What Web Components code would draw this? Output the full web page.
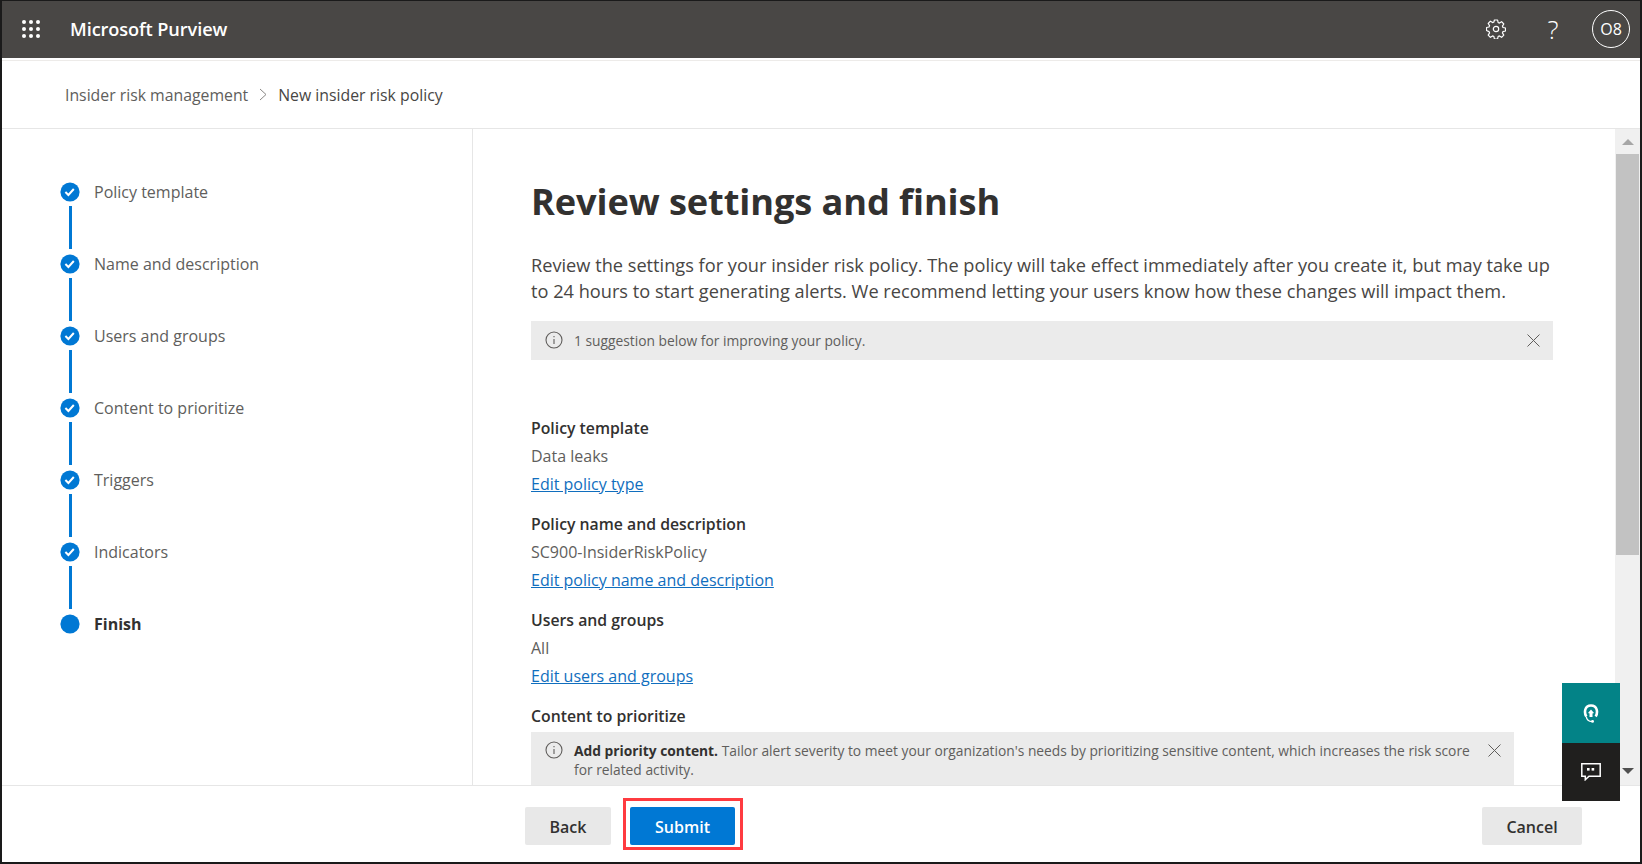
<!DOCTYPE html>
<html lang="en">
<head>
<meta charset="utf-8">
<title>New insider risk policy</title>
<style>
  html, body { margin: 0; height: 100%; overflow: hidden; background: #fff; }
  body { font-family: "Open Sans", "Liberation Sans", sans-serif; color: #323130; }
</style>
</head>
<body>
<purview-app></purview-app>

<script>
const INFO_ICON = `<svg width="18" height="18" viewBox="0 0 18 18" fill="none" stroke="#605e5c" stroke-width="1.1"><circle cx="9" cy="9" r="8"/><path d="M9 8v5M9 5v1.3"/></svg>`;
const CLOSE_ICON = `<svg width="13" height="13" viewBox="0 0 13 13" fill="none" stroke="#605e5c" stroke-width="1"><path d="M.5.5l12 12M12.5.5l-12 12"/></svg>`;

class AppHeader extends HTMLElement {
  constructor() {
    super();
    const shadow = this.attachShadow({ mode: "open" });
    const dots = [3, 10, 17].flatMap((y) => [3, 10, 17].map((x) => `<circle cx="${x}" cy="${y}" r="2"/>`)).join("");
    shadow.innerHTML = `
    <style>
      :host { display: flex; align-items: center; box-sizing: border-box; height: 57px; padding-bottom: 2px; background: #494745; color: #fff; flex: none; }
      .waffle { display: flex; margin-left: 19px; }
      .name { margin-left: 29px; font-size: 18.2px; font-weight: 600; letter-spacing: -0.1px; flex: 1; }
      .icons { display: flex; align-items: center; }
      .gear { display: flex; margin-right: 37px; }
      .help { font-size: 26px; font-weight: 300; width: 20px; text-align: center; margin-right: 29px; line-height: 1; }
      .me { width: 36px; height: 36px; border: 1px solid #fff; border-radius: 50%; display: flex; align-items: center; justify-content: center; font-size: 16px; margin-right: 10px; }
    </style>
    <span class="waffle"><svg width="20" height="20" viewBox="0 0 20 20" fill="#fff">${dots}</svg></span>
    <span class="name">Microsoft Purview</span>
    <div class="icons">
      <span class="gear"><svg width="20" height="20" viewBox="0 0 20 20" fill="none" stroke="#fff" stroke-width="1.2" stroke-linejoin="round">
        <circle cx="10" cy="10" r="2.7"/>
        <path d="M8.4 1h3.2l.5 2.5 1.3.6 2.2-1.4 2.2 2.3-1.4 2.1.6 1.4 2.5.5v3l-2.5.6-.6 1.3 1.4 2.2-2.2 2.2-2.2-1.4-1.3.6-.5 2.5H8.4l-.5-2.5-1.3-.6-2.2 1.4-2.2-2.2 1.4-2.2-.6-1.3L.5 11.5v-3L3 8l.6-1.4-1.4-2.1 2.2-2.3 2.2 1.4 1.3-.6z"/>
      </svg></span>
      <span class="help">?</span>
      <span class="me">O8</span>
    </div>`;
  }
}

class AppBreadcrumb extends HTMLElement {
  constructor() {
    super();
    this.attachShadow({ mode: "open" }).innerHTML = `
    <style>
      :host { display: flex; align-items: center; flex: none; height: 67px; margin-top: 2px; border-top: 1px solid #edebe9; border-bottom: 1px solid #e6e6e6; padding-left: 63px; font-size: 15.8px; color: #605e5c; }
      svg { margin: 0 10px 0 11px; }
      .current { color: #484644; }
    </style>
    <span>Insider risk management</span>
    <svg width="9" height="13" viewBox="0 0 9 13" fill="none" stroke="#8a8886"><path d="M1 1l6 5.5L1 12"/></svg>
    <span class="current">New insider risk policy</span>`;
  }
}

class WizardStep extends HTMLElement {
  constructor() {
    super();
    const current = this.hasAttribute("current");
    const check = current ? "" : `<path d="M5.4 10l3 3 5.4-6" fill="none" stroke="#fff" stroke-width="2"/>`;
    this.attachShadow({ mode: "open" }).innerHTML = `
    <style>
      :host { display: flex; flex-direction: column; height: 72px; }
      :host(:last-child) { height: auto; }
      .row { display: flex; align-items: center; height: 20px; }
      svg { flex: none; }
      .label { margin-left: 14px; font-size: 16px; color: #605e5c; }
      :host([current]) .label { font-weight: 700; color: #323130; }
      .line { width: 3px; height: 43px; margin: 4px 0 0 9px; background: #0078d4; }
      :host(:last-child) .line { display: none; }
    </style>
    <div class="row">
      <svg width="20" height="20" viewBox="0 0 20 20"><circle cx="10" cy="10" r="9.6" fill="#0078d4"/>${check}</svg>
      <span class="label"><slot></slot></span>
    </div>
    <div class="line"></div>`;
  }
}

class WizardSteps extends HTMLElement {
  constructor() {
    super();
    this.attachShadow({ mode: "open" }).innerHTML = `
    <style>
      :host { display: block; width: 412px; flex: none; padding: 53px 0 0 58px; border-right: 1px solid #e6e6e6; }
    </style>
    <slot></slot>`;
  }
}

class InfoBar extends HTMLElement {
  constructor() {
    super();
    this.attachShadow({ mode: "open" }).innerHTML = `
    <style>
      :host { display: flex; align-items: flex-start; background: #ebebeb; font-size: 13.8px; line-height: 19px; color: #605e5c; padding: 10px 13px 10px 14px; }
      .i { display: flex; flex: none; margin: 0 11px 0 0; }
      .text { flex: 1; }
      .x { display: flex; flex: none; margin: 3px 0 0 10px; }
      ::slotted(b) { font-weight: 700; color: #323130; }
    </style>
    <span class="i">${INFO_ICON}</span>
    <span class="text"><slot></slot></span>
    <span class="x">${CLOSE_ICON}</span>`;
  }
}

class ReviewSection extends HTMLElement {
  constructor() {
    super();
    const heading = this.getAttribute("heading") || "";
    const value = this.getAttribute("value");
    const link = this.getAttribute("link");
    this.attachShadow({ mode: "open" }).innerHTML = `
    <style>
      :host { display: block; font-size: 16px; line-height: 28px; margin-bottom: 12px; color: #605e5c; }
      .h { font-weight: 600; color: #323130; font-size: 15.8px; }
      a { display: inline-block; color: #106ebe; text-decoration: underline; }
    </style>
    <div class="h">${heading}</div>
    ${value ? `<div>${value}</div>` : ""}
    ${link ? `<a href="#">${link}</a>` : ""}
    <slot></slot>`;
  }
}

class ScrollTrack extends HTMLElement {
  constructor() {
    super();
    this.attachShadow({ mode: "open" }).innerHTML = `
    <style>
      :host { display: flex; flex-direction: column; align-items: center; width: 25px; flex: none; background: #f0f0f0; }
      .up { width: 0; height: 0; margin-top: 10px; border: 6px solid transparent; border-top: 0; border-bottom-color: #a6a6a6; }
      .thumb { width: 23px; height: 401px; background: #c2c2c2; margin-top: 9px; }
      .down { width: 0; height: 0; margin-top: auto; margin-bottom: 11px; border: 6px solid transparent; border-bottom: 0; border-top-color: #505050; }
    </style>
    <span class="up"></span><span class="thumb"></span><span class="down"></span>`;
  }
}

class ReviewPane extends HTMLElement {
  constructor() {
    super();
    this.attachShadow({ mode: "open" }).innerHTML = `
    <style>
      :host { display: block; flex: 1; min-width: 0; overflow: hidden; padding: 0 62px 0 58px; color: #484644; }
      h1 { margin: 42px 0 0; font-size: 36.2px; line-height: 60px; font-weight: 700; color: #323130; letter-spacing: -0.1px; }
      p { margin: 21px 0 0; font-size: 18.2px; line-height: 26px; color: #484644; }
      .notice { margin-top: 17px; }
      .sections { margin-top: 54px; }
    </style>
    <h1>Review settings and finish</h1>
    <p>Review the settings for your insider risk policy. The policy will take effect immediately after you create it, but may take up to 24 hours to start generating alerts. We recommend letting your users know how these changes will impact them.</p>
    <info-bar class="notice">1 suggestion below for improving your policy.</info-bar>
    <div class="sections"><slot></slot></div>`;
  }
}

class WizardFooter extends HTMLElement {
  constructor() {
    super();
    this.attachShadow({ mode: "open" }).innerHTML = `
    <style>
      :host { display: flex; align-items: center; flex: none; box-sizing: border-box; height: 77px; background: #fff; border-top: 1px solid #e6e6e6; padding: 4px 58px 0 523px; position: relative; }
      button { height: 38px; border: 0; border-radius: 2px; padding: 2px 0 0; font: 600 16px "Open Sans", "Liberation Sans", sans-serif; background: #e8e8e8; color: #323130; }
      .back { width: 86px; }
      .submit { width: 105px; margin-left: 19px; background: #0078d4; color: #fff; }
      .cancel { width: 100px; margin-left: auto; }
      .mark { position: absolute; left: 621px; top: 12px; width: 114px; height: 46px; border: 3px solid #ff3b40; }
    </style>
    <button class="back">Back</button>
    <button class="submit">Submit</button>
    <button class="cancel">Cancel</button>
    <span class="mark"></span>`;
  }
}

class HelpDock extends HTMLElement {
  constructor() {
    super();
    this.attachShadow({ mode: "open" }).innerHTML = `
    <style>
      :host { position: absolute; left: 1560px; top: 682px; width: 58px; display: flex; flex-direction: column; }
      span { display: flex; align-items: center; justify-content: center; }
      .help { height: 60px; background: #038387; }
      .chat { height: 58px; background: #201f1e; }
    </style>
    <span class="help"><svg width="16" height="19" viewBox="0 0 16 19" fill="none" stroke="#fff" stroke-width="2.6"><path d="M3.3 12.5C1 8.5 1.5 1.5 8 1.5S15 8.5 12.7 12.5"/><path d="M8 5.5l3 3.5-1.5.5V13h-3V9.5L5 9z" fill="#fff" stroke="none"/><path d="M3.2 12.5c.6 3.6 2.6 5 5.8 5" stroke-width="1.4"/><circle cx="9.6" cy="17.4" r="1.4" fill="#fff" stroke="none"/></svg></span>
    <span class="chat"><svg width="20" height="18" viewBox="0 0 20 18" fill="none" stroke="#fff" stroke-width="1.5"><path d="M.8.8h18.4v12.4H8l-3.7 3.5v-3.5H.8z"/><rect x="6" y="5" width="2.6" height="2.6" fill="#fff" stroke="none"/><rect x="10.6" y="5" width="2.6" height="2.6" fill="#fff" stroke="none"/></svg></span>`;
  }
}

class PurviewApp extends HTMLElement {
  constructor() {
    super();
    this.attachShadow({ mode: "open" }).innerHTML = `
    <style>
      :host { display: flex; flex-direction: column; position: relative; box-sizing: border-box; width: 1642px; height: 864px; border: solid #1a1a1a; border-width: 1px 2px 2px 2px; overflow: hidden; }
      .body { display: flex; flex: 1; min-height: 0; }
    </style>
    <app-header></app-header>
    <app-breadcrumb></app-breadcrumb>
    <div class="body">
      <wizard-steps>
        <wizard-step>Policy template</wizard-step>
        <wizard-step>Name and description</wizard-step>
        <wizard-step>Users and groups</wizard-step>
        <wizard-step>Content to prioritize</wizard-step>
        <wizard-step>Triggers</wizard-step>
        <wizard-step>Indicators</wizard-step>
        <wizard-step current>Finish</wizard-step>
      </wizard-steps>
      <review-pane>
        <review-section heading="Policy template" value="Data leaks" link="Edit policy type"></review-section>
        <review-section heading="Policy name and description" value="SC900-InsiderRiskPolicy" link="Edit policy name and description"></review-section>
        <review-section heading="Users and groups" value="All" link="Edit users and groups"></review-section>
        <review-section heading="Content to prioritize">
          <info-bar style="margin: 2px 39px 0 0; padding-top: 9px"><b>Add priority content.</b> Tailor alert severity to meet your organization's needs by prioritizing sensitive content, which increases the risk score for related activity.</info-bar>
        </review-section>
      </review-pane>
      <scroll-track></scroll-track>
    </div>
    <wizard-footer></wizard-footer>
    <help-dock></help-dock>`;
  }
}

customElements.define("info-bar", InfoBar);
customElements.define("app-header", AppHeader);
customElements.define("app-breadcrumb", AppBreadcrumb);
customElements.define("wizard-step", WizardStep);
customElements.define("wizard-steps", WizardSteps);
customElements.define("review-section", ReviewSection);
customElements.define("review-pane", ReviewPane);
customElements.define("scroll-track", ScrollTrack);
customElements.define("wizard-footer", WizardFooter);
customElements.define("help-dock", HelpDock);
customElements.define("purview-app", PurviewApp);
</script>
</body>
</html>
